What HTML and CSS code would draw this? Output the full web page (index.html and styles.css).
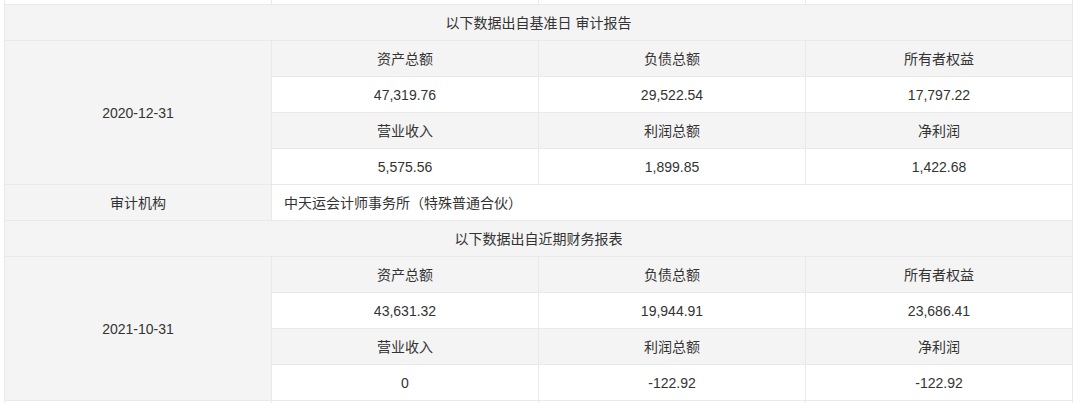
FILE: index.html
```html
<!DOCTYPE html>
<html lang="zh">
<head>
<meta charset="utf-8">
<link rel="stylesheet" href="styles.css">
</head>
<body>
<div class="wrap">
<table class="fin">
  <colgroup><col class="c"><col class="c"><col class="c"><col class="c"></colgroup>
  <tr class="cut"><td></td><td></td><td></td><td></td></tr>
  <tr><td colspan="4" class="hd">以下数据出自基准日 审计报告</td></tr>
  <tr><td rowspan="4" class="hd">2020-12-31</td><td class="hd">资产总额</td><td class="hd">负债总额</td><td class="hd">所有者权益</td></tr>
  <tr><td>47,319.76</td><td>29,522.54</td><td>17,797.22</td></tr>
  <tr><td class="hd">营业收入</td><td class="hd">利润总额</td><td class="hd">净利润</td></tr>
  <tr><td>5,575.56</td><td>1,899.85</td><td>1,422.68</td></tr>
  <tr><td class="hd">审计机构</td><td colspan="3" class="left">中天运会计师事务所（特殊普通合伙）</td></tr>
  <tr><td colspan="4" class="hd">以下数据出自近期财务报表</td></tr>
  <tr><td rowspan="4" class="hd">2021-10-31</td><td class="hd">资产总额</td><td class="hd">负债总额</td><td class="hd">所有者权益</td></tr>
  <tr><td>43,631.32</td><td>19,944.91</td><td>23,686.41</td></tr>
  <tr><td class="hd">营业收入</td><td class="hd">利润总额</td><td class="hd">净利润</td></tr>
  <tr><td>0</td><td>-122.92</td><td>-122.92</td></tr>
  <tr class="cut"><td></td><td></td><td></td><td></td></tr>
</table>
</div>
</body>
</html>
```
FILE: styles.css
```css
html, body {
  margin: 0;
  padding: 0;
  background: #fff;
}
body {
  font-family: "Liberation Sans", "Noto Sans CJK SC", sans-serif;
  font-size: 14px;
  color: #333;
  overflow: hidden;
}
.wrap {
  padding-left: 4px;
  margin-top: -1px;
}
.fin {
  border-collapse: collapse;
  table-layout: fixed;
  width: 1068px;
}
.fin .c {
  width: 267px;
}
.fin td {
  border: 1px solid #e9e9e9;
  height: 35px;
  padding: 0 12px;
  text-align: center;
  vertical-align: middle;
  background: #fff;
  line-height: 20px;
}
.fin td.hd {
  background: #f4f4f4;
}
.fin td.left {
  text-align: left;
}
.fin tr.cut td {
  height: 4px;
  padding: 0;
  line-height: 0;
}
```
